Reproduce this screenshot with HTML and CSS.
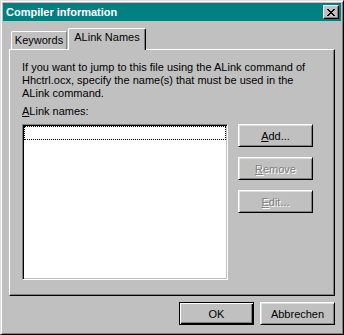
FILE: index.html
```html
<!DOCTYPE html>
<html>
<head>
  <title>Compiler information</title>
  <link rel="stylesheet" href="styles.css">
</head>
<body>
    <div class="window">
        <div class="titlebar">
            <span class="title">Compiler information</span>
            <button class="close-button">
                <svg width="8" height="7" viewBox="0 0 8 7">
                    <path d="M0 0h2v1h-2z M6 0h2v1h-2z M1 1h2v1h-2z M5 1h2v1h-2z M2 2h4v1h-4z M3 3h2v1h-2z M2 4h4v1h-4z M1 5h2v1h-2z M5 5h2v1h-2z M0 6h2v1h-2z M6 6h2v1h-2z" fill="#000"/>
                </svg>
            </button>
        </div>
        <div class="dialog-body">
            <div class="tabs">
                <div class="tab">Keywords</div>
                <div class="tab active">ALink Names</div>
            </div>
            <div class="panel">
                <p class="hint">If you want to jump to this file using the ALink command of<br>Hhctrl.ocx, specify the name(s) that must be used in the<br>ALink command.</p>
                <div class="field-label"><u>A</u>Link names:</div>
                <div class="list-row">
                    <div class="listbox">
                        <div class="list-item"></div>
                    </div>
                    <div class="side-buttons">
                        <button class="btn"><u>A</u>dd...</button>
                        <button class="btn" disabled><u>R</u>emove</button>
                        <button class="btn" disabled><u>E</u>dit...</button>
                    </div>
                </div>
            </div>
            <div class="footer">
                <button class="btn default">OK</button>
                <button class="btn">Abbrechen</button>
            </div>
        </div>
    </div>
</body>
</html>
```

FILE: styles.css
```css
/* Page */
body {
    margin: 0;
    font-family: 'Liberation Sans', Arial, sans-serif;
    font-size: 11px;
    color: #000;
    background-color: #c0c0c0;
}

/* Window frame */
.window {
    width: 344px;
    height: 335px;
    box-sizing: border-box;
    padding: 2px;
    border: 1px solid;
    border-color: #dfdfdf #000 #000 #dfdfdf;
    box-shadow: inset 1px 1px #fff, inset -1px -1px #808080;
    background-color: #c0c0c0;
}

/* Title bar */
.titlebar {
    height: 18px;
    display: flex;
    align-items: center;
    justify-content: space-between;
    padding: 0 2px 0 3px;
    background-color: #008080;
}

.title {
    color: #fff;
    font-weight: bold;
    font-size: 11px;
}

.close-button {
    width: 16px;
    height: 14px;
    padding: 0;
    display: flex;
    align-items: center;
    justify-content: center;
    background-color: #c0c0c0;
    border: 1px solid;
    border-color: #fff #000 #000 #fff;
    box-shadow: inset -1px -1px #808080;
}

.close-button svg {
    display: block;
    margin-left: -1px;
}

/* Tabs */
.dialog-body {
    padding: 7px 6px 0 6px;
}

.tabs {
    display: flex;
    align-items: flex-end;
    height: 21px;
    padding-left: 2px;
}

.tab {
    box-sizing: border-box;
    width: 56px;
    height: 18px;
    padding-top: 2px;
    line-height: 13px;
    text-align: center;
    border: 1px solid;
    border-bottom: none;
    border-color: #fff #808080 #fff #fff;
    border-radius: 2px 2px 0 0;
    background-color: #c0c0c0;
}

.tab.active {
    position: relative;
    z-index: 1;
    width: 78px;
    height: 22px;
    margin-left: 1px;
    margin-bottom: -1px;
    border-color: #fff #000 #fff #fff;
    box-shadow: inset -1px 0 #808080;
}

/* Tab page */
.panel {
    height: 247px;
    box-sizing: border-box;
    padding: 11px 12px 0 12px;
    border: 1px solid;
    border-color: #fff #000 #000 #fff;
    box-shadow: inset -1px -1px #808080;
}

.hint {
    margin: 0;
    line-height: 13px;
}

.field-label {
    margin-top: 5px;
    line-height: 13px;
}

.list-row {
    display: flex;
    gap: 10px;
    margin-top: 6px;
}

.listbox {
    width: 206px;
    height: 156px;
    box-sizing: border-box;
    padding: 1px;
    border: 1px solid;
    border-color: #808080 #fff #fff #808080;
    box-shadow: inset 1px 1px #000, inset -1px -1px #c0c0c0;
    background-color: #fff;
}

.list-item {
    height: 14px;
    box-sizing: border-box;
    border: 1px dotted #000;
}

.side-buttons {
    display: flex;
    flex-direction: column;
    gap: 10px;
}

/* Buttons */
.btn {
    width: 75px;
    height: 23px;
    padding: 0;
    font-family: inherit;
    font-size: 11px;
    color: #000;
    background-color: #c0c0c0;
    border: 1px solid;
    border-color: #fff #000 #000 #fff;
    box-shadow: inset 1px 1px #dfdfdf, inset -1px -1px #808080;
}

.btn:disabled {
    color: #808080;
    text-shadow: 1px 1px #fff;
}

.btn.default {
    border-color: #000;
    box-shadow: inset 1px 1px #fff, inset -1px -1px #000, inset -2px -2px #808080;
}

.footer {
    display: flex;
    justify-content: flex-end;
    gap: 6px;
    padding-top: 6px;
}
```
